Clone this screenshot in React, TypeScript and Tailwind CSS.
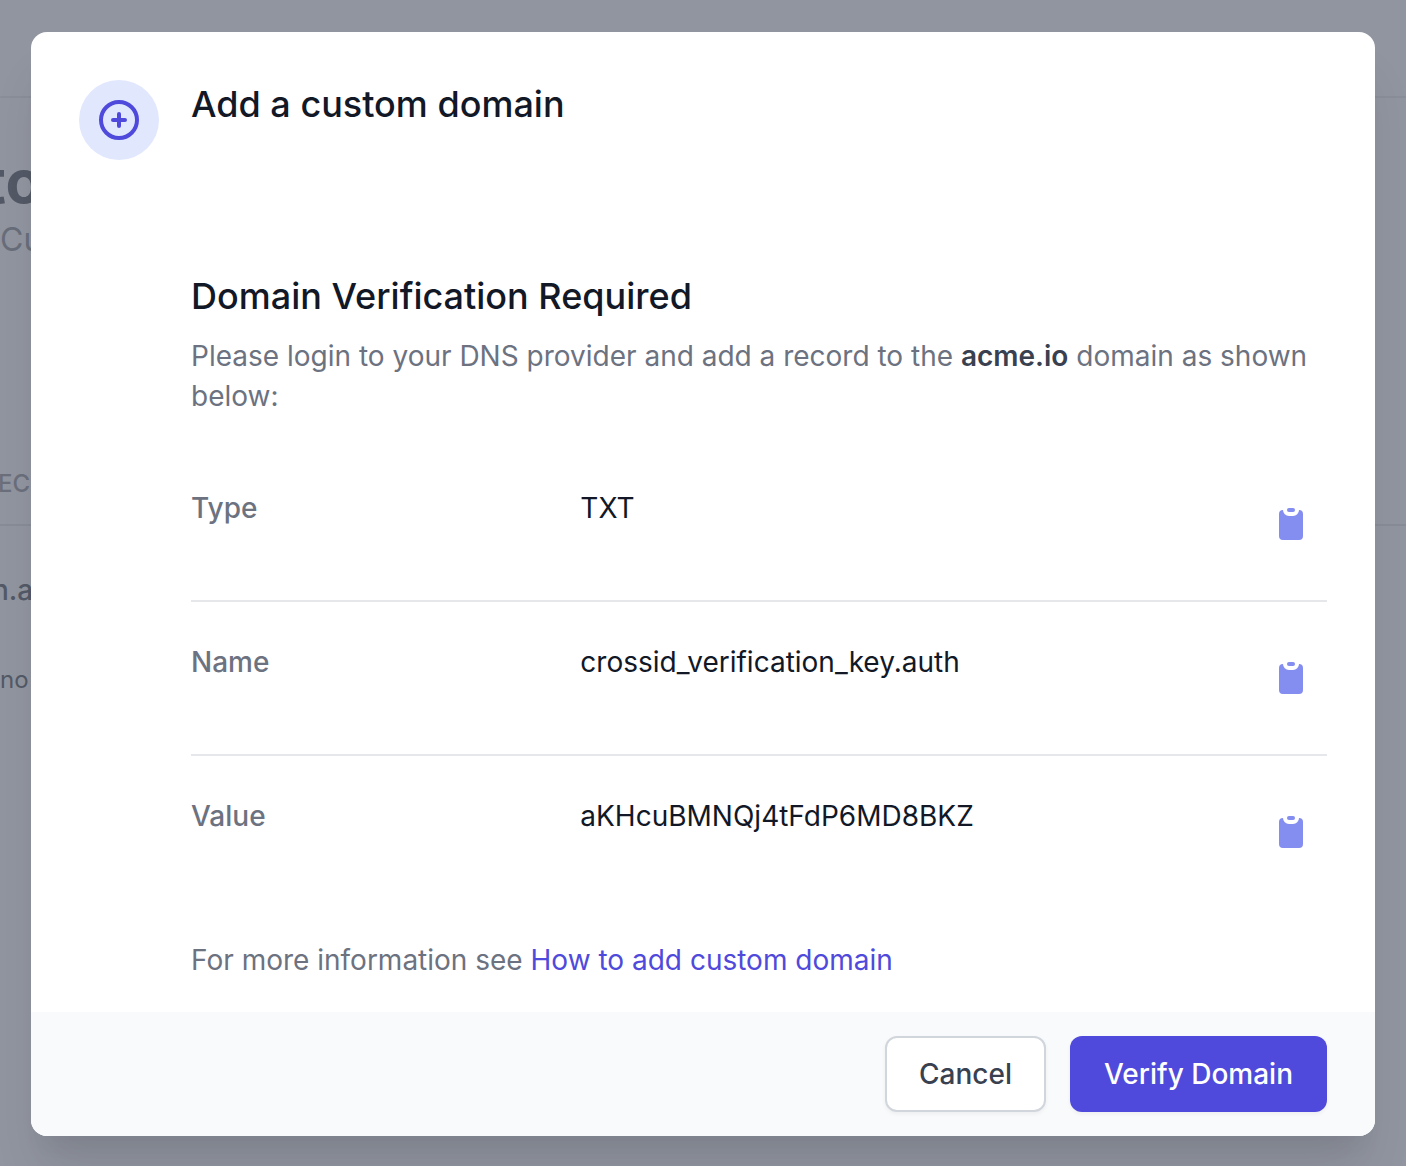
const records = [
  { label: "Type", value: "TXT" },
  { label: "Name", value: "crossid_verification_key.auth" },
  { label: "Value", value: "aKHcuBMNQj4tFdP6MD8BKZ" },
];

function ClipboardIcon() {
  return (
    <svg viewBox="0 0 20 20" fill="currentColor" className="size-10" aria-hidden="true">
      <path d="M8 3a1 1 0 011-1h2a1 1 0 110 2H9a1 1 0 01-1-1z" />
      <path d="M6 3a2 2 0 00-2 2v11a2 2 0 002 2h8a2 2 0 002-2V5a2 2 0 00-2-2 3 3 0 01-3 3H9a3 3 0 01-3-3z" />
    </svg>
  );
}

function PlusCircleIcon() {
  return (
    <svg viewBox="0 0 24 24" fill="none" stroke="currentColor" strokeWidth="2" strokeLinecap="round" strokeLinejoin="round" className="size-12" aria-hidden="true">
      <path d="M12 9v3m0 0v3m0-3h3m-3 0H9m12 0a9 9 0 11-18 0 9 9 0 0118 0z" />
    </svg>
  );
}

function Backdrop() {
  return (
    <div className="absolute inset-0 overflow-hidden whitespace-nowrap bg-[#9195a0]" aria-hidden="true">
      <div className="h-[98px] border-b-2 border-[#8a8e99]" />
      <p className="-ml-4 mt-12 text-[60px] font-bold leading-[70px] text-[#535966]">to</p>
      <p className="text-[32px] leading-12 text-[#686d7a]">Cu</p>
      <div className="mt-[202px] flex h-[60px] border-b-2 border-[#888c97] text-2xl leading-9 font-medium text-[#6b6f7c]">
        <span className="-ml-0.5">EC</span>
      </div>
      <p className="-ml-2 mt-11 text-[28px] font-medium leading-10 text-[#535966]">n.a</p>
      <p className="mt-13 text-2xl leading-9 text-[#535966]">no</p>
    </div>
  );
}

export default function App() {
  return (
    <div className="relative min-h-screen px-[31px] pt-8 pb-[30px] font-[Inter,sans-serif]">
      <Backdrop />
      <main role="dialog" aria-labelledby="dialog-title" className="relative overflow-hidden rounded-2xl bg-white shadow-[0_40px_50px_-10px_rgba(0,0,0,0.1),0_20px_20px_-10px_rgba(0,0,0,0.04)]">
        <div className="flex gap-8 px-12 pt-12 pb-8">
          <div className="flex size-20 shrink-0 items-center justify-center rounded-full bg-[#e1e7fd] text-[#4f4adb]">
            <PlusCircleIcon />
          </div>
          <div className="min-w-0 flex-1">
            <h1 id="dialog-title" className="text-4xl leading-12 font-medium text-[#121826]">Add a custom domain</h1>
            <h2 className="mt-36 text-4xl leading-12 font-medium text-[#121826]">Domain Verification Required</h2>
            <p className="mt-4 text-[28px] leading-10 text-[#6c727f]">
              Please login to your DNS provider and add a record to the <strong className="font-semibold text-[#394150]">acme.io</strong> domain as shown below:
            </p>
            <dl className="mt-8 divide-y-2 divide-gray-200 text-[28px] leading-10">
              {records.map((record) => (
                <div key={record.label} className="grid grid-cols-3 gap-8 py-10">
                  <dt className="font-medium text-[#6c727f]">{record.label}</dt>
                  <dd className="col-span-2 flex justify-between text-[#121826]">
                    <span>{record.value}</span>
                    <button type="button" aria-label={`Copy ${record.label}`} className="my-4 mr-4 text-[#848df0]">
                      <ClipboardIcon />
                    </button>
                  </dd>
                </div>
              ))}
            </dl>
            <p className="mt-8 text-[28px] leading-10 text-[#6c727f]">
              For more information see <a href="#custom-domain" className="text-[#4f4adb]">How to add custom domain</a>
            </p>
          </div>
        </div>
        <div className="flex justify-end gap-6 bg-gray-50 px-12 py-6 text-[28px] leading-10 font-medium">
          <button type="button" className="rounded-xl border-2 border-gray-300 bg-white px-8 py-4 text-[#394150] shadow-[0_2px_4px_rgba(0,0,0,0.05)]">Cancel</button>
          <button type="button" className="rounded-xl border-2 border-transparent bg-[#4f4adb] px-8 py-4 text-white shadow-[0_2px_4px_rgba(0,0,0,0.05)]">Verify Domain</button>
        </div>
      </main>
    </div>
  );
}
